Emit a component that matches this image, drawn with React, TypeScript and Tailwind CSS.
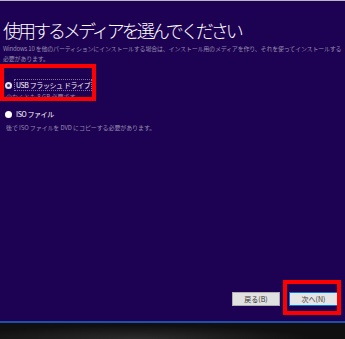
export default function App() {
  return (
    <div className="w-[345px] h-[339px] flex flex-col bg-[#1d0152] overflow-hidden font-['Noto_Sans_CJK_JP','Noto_Sans',sans-serif]">
      <div className="h-px bg-[#b9b5c6]"></div>

      <div className="relative flex-1 flex flex-col px-[3px]">
        {/* Title */}
        <h1 className="pt-[18px] text-[18px] leading-[22px] tracking-[-3px] text-white font-light whitespace-nowrap">
          使用するメディアを選んでください
        </h1>
        <p className="mt-[3px] text-[6px] leading-[10px] tracking-[-0.2px] text-[#958db0] whitespace-nowrap">
          Windows 10 を他のパーティションにインストールする場合は、インストール用のメディアを作り、それを使ってインストールする
          <br />
          必要があります。
        </p>

        {/* Options */}
        <div className="mt-[15px] flex items-center h-[12px] pl-[2px]">
          <span className="w-[7px] h-[7px] rounded-full bg-[#e4e2ea] flex items-center justify-center">
            <span className="w-[3px] h-[3px] rounded-full bg-[#3a2a60]"></span>
          </span>
          <span className="ml-[3px] px-[1px] text-[7px] leading-[10px] tracking-[-0.4px] text-white outline outline-1 outline-dotted outline-[#7d74a0] whitespace-nowrap">
            USB フラッシュ ドライブ
          </span>
        </div>
        <p className="pl-[3px] mt-[1px] text-[6px] leading-[10px] text-[#958db0] whitespace-nowrap">
          少なくとも 8 GB 必要です。
        </p>

        <div className="mt-[6px] flex items-center h-[12px] pl-[2px]">
          <span className="w-[7px] h-[7px] rounded-full bg-white"></span>
          <span className="ml-[4px] text-[7px] leading-[10px] tracking-[-0.4px] text-white whitespace-nowrap">
            ISO ファイル
          </span>
        </div>
        <p className="mt-[3px] pl-[3px] text-[6px] leading-[10px] tracking-[-0.1px] text-[#958db0] whitespace-nowrap">
          後で ISO ファイルを DVD にコピーする必要があります。
        </p>

        {/* Buttons */}
        <div className="mt-auto mb-[15px] flex justify-end gap-[9px] pr-[4px]">
          <button className="w-[48px] h-[14px] bg-[#e1e1e1] border border-[#adadad] text-[7px] leading-none text-[#333]">
            戻る(B)
          </button>
          <button className="w-[49px] h-[14px] bg-[#e5e5e5] border border-[#0078d7] text-[7px] leading-none text-[#333]">
            次へ(N)
          </button>
        </div>

        {/* Annotation boxes */}
        <div className="absolute left-0 top-[63px] w-[96px] h-[37px] border-4 border-[#ff0000]"></div>
        <div className="absolute left-[283px] top-[279px] w-[58px] h-[35px] border-4 border-[#ff0000]"></div>
      </div>

      <div className="h-[2px] bg-[#1f4fa8]"></div>
      <div className="h-[16px] bg-[radial-gradient(ellipse_at_40%_100%,#2c2c2c,#101010_60%)]"></div>
    </div>
  )
}
